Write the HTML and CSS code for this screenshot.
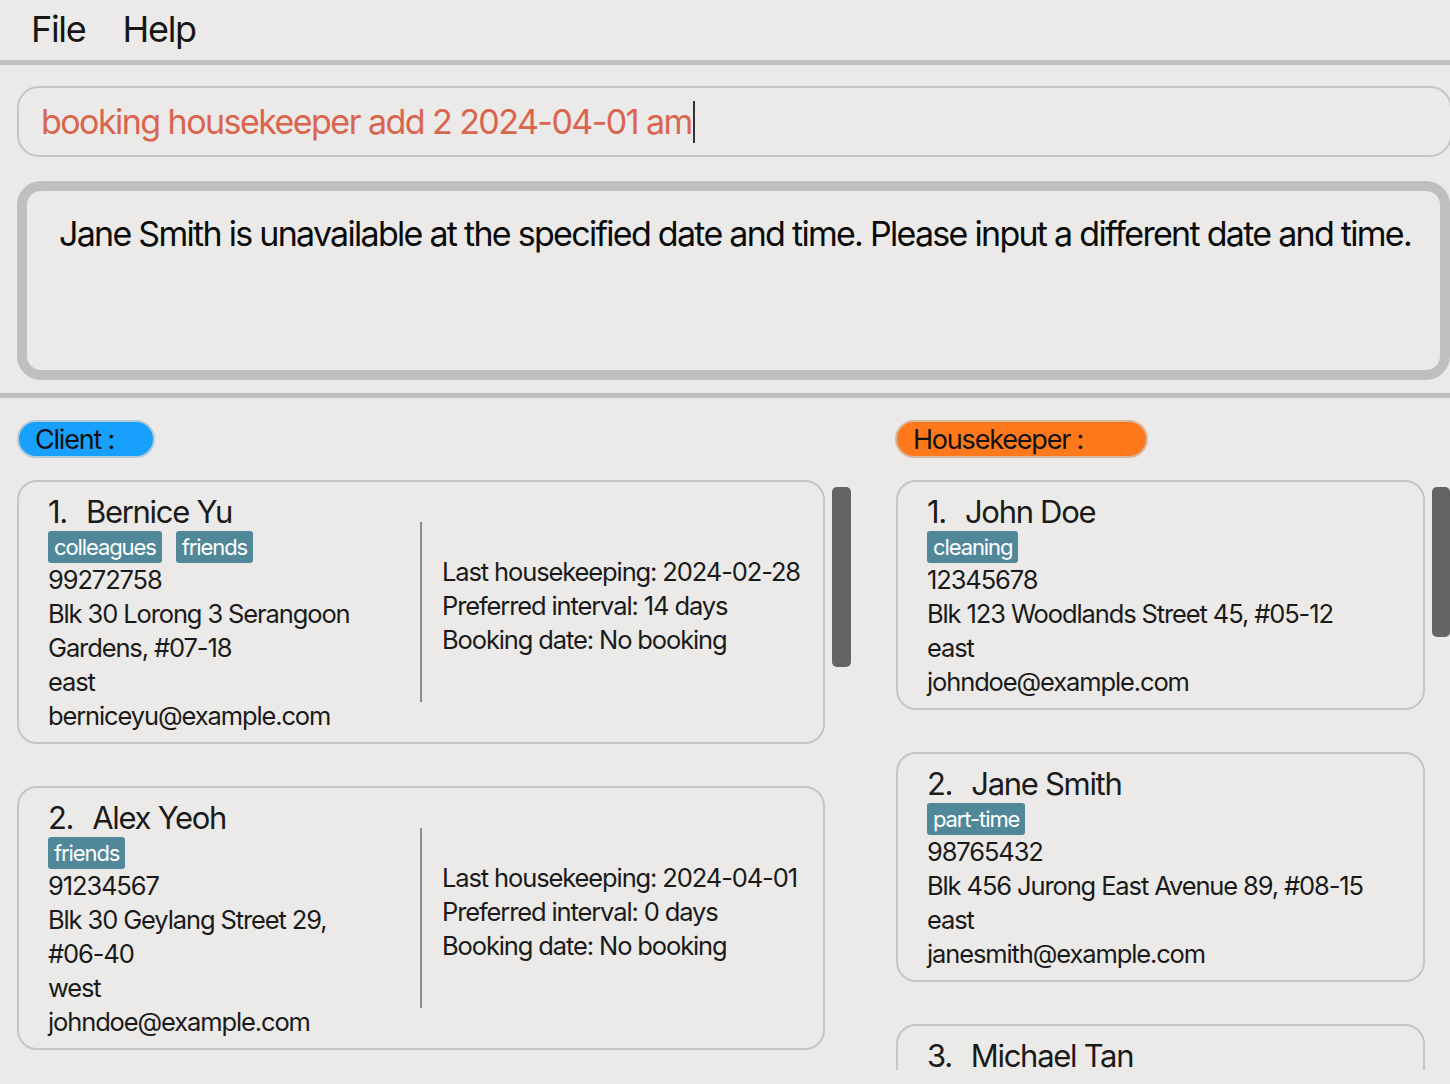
FILE: index.html
```html
<!DOCTYPE html>
<html>
<head>
<meta charset="utf-8">
<link rel="stylesheet" href="styles.css">
</head>
<body>
<div class="app">
  <div class="menubar">
    <span class="menu-item">File</span>
    <span class="menu-item">Help</span>
  </div>
  <div class="rule"></div>
  <div class="command-wrap">
    <div class="command-box"><span class="command-text">booking housekeeper add 2 2024-04-01 am</span><span class="caret"></span></div>
  </div>
  <div class="result-wrap">
    <div class="result-box">Jane Smith is unavailable at the specified date and time. Please input a different date and time.</div>
  </div>
  <div class="rule"></div>
  <div class="lists">
    <section class="pane pane-client">
      <div class="pill pill-client">Client :</div>
      <div class="viewport">
        <div class="list">
          <div class="card">
            <div class="col-main">
              <div class="name"><span class="idx">1.</span>Bernice Yu</div>
              <div class="tags"><span class="tag">colleagues</span><span class="tag">friends</span></div>
              <div class="line">99272758</div>
              <div class="line">Blk 30 Lorong 3 Serangoon</div>
              <div class="line">Gardens, #07-18</div>
              <div class="line">east</div>
              <div class="line">berniceyu@example.com</div>
            </div>
            <div class="divider"></div>
            <div class="col-side">
              <div class="line">Last housekeeping: 2024-02-28</div>
              <div class="line">Preferred interval: 14 days</div>
              <div class="line">Booking date: No booking</div>
            </div>
          </div>
          <div class="card">
            <div class="col-main">
              <div class="name"><span class="idx">2.</span>Alex Yeoh</div>
              <div class="tags"><span class="tag">friends</span></div>
              <div class="line">91234567</div>
              <div class="line">Blk 30 Geylang Street 29,</div>
              <div class="line">#06-40</div>
              <div class="line">west</div>
              <div class="line">johndoe@example.com</div>
            </div>
            <div class="divider"></div>
            <div class="col-side">
              <div class="line">Last housekeeping: 2024-04-01</div>
              <div class="line">Preferred interval: 0 days</div>
              <div class="line">Booking date: No booking</div>
            </div>
          </div>
        </div>
        <div class="scrolltrack"><div class="thumb thumb-client"></div></div>
      </div>
    </section>
    <section class="pane pane-keeper">
      <div class="pill pill-keeper">Housekeeper :</div>
      <div class="viewport">
        <div class="list">
          <div class="card card-hk">
            <div class="col-main">
              <div class="name"><span class="idx">1.</span>John Doe</div>
              <div class="tags"><span class="tag">cleaning</span></div>
              <div class="line">12345678</div>
              <div class="line">Blk 123 Woodlands Street 45, #05-12</div>
              <div class="line">east</div>
              <div class="line">johndoe@example.com</div>
            </div>
          </div>
          <div class="card card-hk">
            <div class="col-main">
              <div class="name"><span class="idx">2.</span>Jane Smith</div>
              <div class="tags"><span class="tag">part-time</span></div>
              <div class="line">98765432</div>
              <div class="line">Blk 456 Jurong East Avenue 89, #08-15</div>
              <div class="line">east</div>
              <div class="line">janesmith@example.com</div>
            </div>
          </div>
          <div class="card card-hk card-partial">
            <div class="col-main">
              <div class="name"><span class="idx">3.</span>Michael Tan</div>
            </div>
          </div>
        </div>
        <div class="scrolltrack"><div class="thumb thumb-keeper"></div></div>
      </div>
    </section>
  </div>
</div>
</body>
</html>
```
FILE: styles.css
```css
html, body {
  margin: 0;
  padding: 0;
  background: #ebeae8;
  height: 100%;
  overflow: hidden;
}
body {
  font-family: Inter, "Noto Sans", sans-serif;
  color: #1c1c1c;
}
.app {
  width: 1450px;
  height: 1084px;
  display: flex;
  flex-direction: column;
  overflow: hidden;
}
.menubar {
  height: 60px;
  display: flex;
  align-items: flex-start;
  padding: 1px 0 0 31px;
  gap: 37px;
  box-sizing: border-box;
}
.menu-item {
  font-size: 36px;
  letter-spacing: -1.3px;
  color: #161616;
  line-height: 56px;
}
.rule {
  height: 5px;
  background: #bfbfbf;
  flex-shrink: 0;
}
.command-wrap {
  padding: 21px 0 0 17px;
}
.command-box {
  height: 71px;
  box-sizing: border-box;
  border: 2px solid #c6c5c3;
  border-radius: 22px;
  margin-right: -2px;
  padding-left: 22px;
  display: flex;
  align-items: center;
}
.command-text {
  font-size: 34px;
  letter-spacing: -1.55px;
  color: #d9654f;
}
.caret {
  display: inline-block;
  width: 2px;
  height: 42px;
  background: #333;
  margin-left: 1px;
}
.result-wrap {
  padding: 24px 0 13px 17px;
}
.result-box {
  height: 199px;
  box-sizing: border-box;
  border: 10px solid #bfbfbf;
  border-radius: 24px;
  padding: 22px 0 0 32px;
  font-size: 34px;
  letter-spacing: -1.72px;
  color: #0a0a0a;
  white-space: nowrap;
}
.lists {
  display: flex;
  padding: 22px 0 0 17px;
  gap: 45px;
  flex: 1;
  min-height: 0;
}
.pane {
  display: flex;
  flex-direction: column;
}
.pane-client { width: 834px; }
.pane-keeper { width: 554px; }
.pill {
  height: 38px;
  box-sizing: border-box;
  border-radius: 19px;
  border: 2px solid #b3c9d8;
  font-size: 27px;
  letter-spacing: -1.2px;
  line-height: 35px;
  padding-left: 16px;
  color: #111;
  align-self: flex-start;
}
.pill-client {
  width: 138px;
  background: #18a0fd;
}
.pill-keeper {
  width: 253px;
  margin-left: -1px;
  background: #fd791c;
  border-color: #d8b8a0;
}
.viewport {
  margin-top: 22px;
  display: flex;
  height: 590px;
  overflow: hidden;
}
.list {
  flex: 1;
  display: flex;
  flex-direction: column;
  gap: 42px;
  overflow: hidden;
}
.card {
  flex-shrink: 0;
  border: 2px solid #c6c5c3;
  border-radius: 20px;
  box-sizing: border-box;
  padding: 13px 0 9px 29px;
  display: flex;
  align-items: center;
  width: 808px;
}
.card-hk {
  width: 529px;
}
.card-partial {
  height: 230px;
  align-items: flex-start;
}
.col-main {
  width: 352px;
}
.card-hk .col-main { width: auto; }
.name {
  font-size: 31px;
  letter-spacing: -1.3px;
  line-height: 34px;
  color: #1a1a1a;
}
.idx {
  margin-right: 19px;
}
.tags {
  display: flex;
  gap: 14px;
  height: 32px;
  margin-top: 2px;
}
.tag {
  background: #508899;
  color: #fff;
  border-radius: 3px;
  font-size: 22px;
  letter-spacing: -1.1px;
  line-height: 32px;
  padding: 0 6px;
}
.line {
  font-size: 25.5px;
  letter-spacing: -1.12px;
  line-height: 34px;
  color: #1a1a1a;
  white-space: nowrap;
}
.divider {
  width: 2px;
  height: 180px;
  background: #8d8d8d;
  margin: 0 20px 4px 20px;
  flex-shrink: 0;
}
.col-side {
  padding-bottom: 16px;
}
.scrolltrack {
  width: 26px;
  flex-shrink: 0;
  position: relative;
}
.pane-keeper .scrolltrack { width: 25px; }
.thumb {
  position: absolute;
  right: 0;
  width: 19px;
  border-radius: 5px;
  background: #646464;
}
.thumb-client {
  top: 7px;
  height: 180px;
}
.thumb-keeper {
  top: 7px;
  height: 150px;
  width: 18px;
}
```
